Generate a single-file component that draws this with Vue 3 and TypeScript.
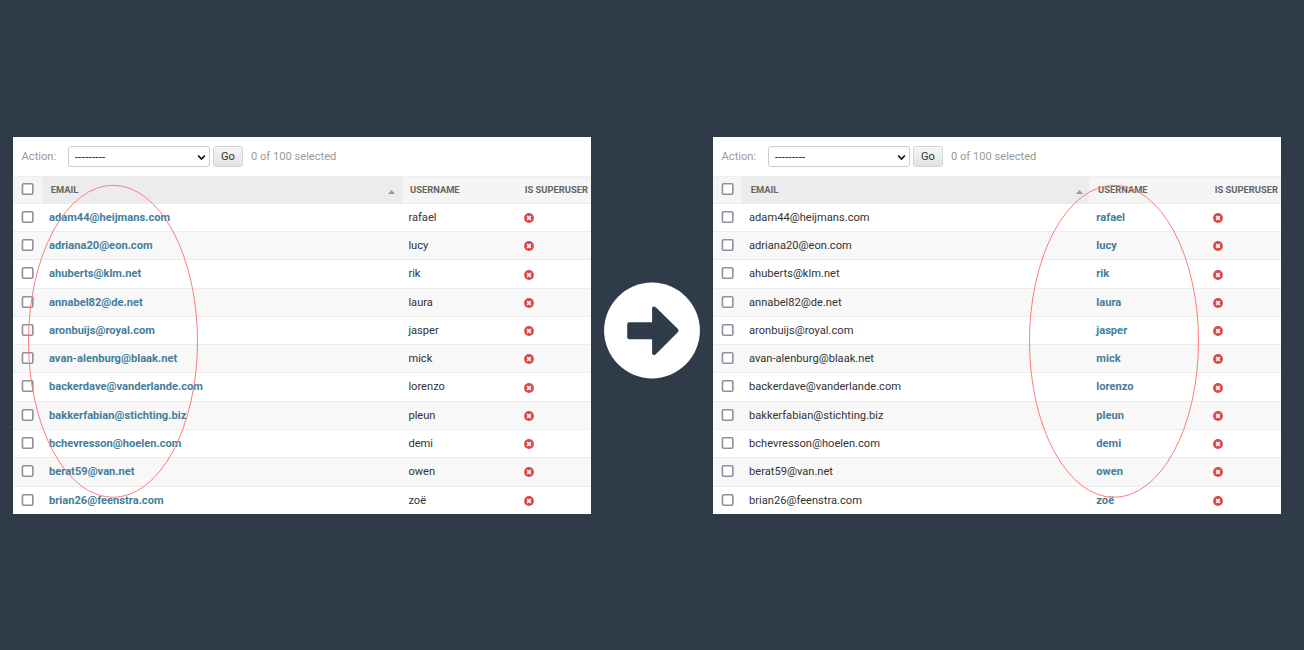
<script setup lang="ts">
interface User {
  email: string
  username: string
}

interface Panel {
  id: string
  linked: 'email' | 'username'
}

const users: User[] = [
  { email: 'adam44@heijmans.com', username: 'rafael' },
  { email: 'adriana20@eon.com', username: 'lucy' },
  { email: 'ahuberts@klm.net', username: 'rik' },
  { email: 'annabel82@de.net', username: 'laura' },
  { email: 'aronbuijs@royal.com', username: 'jasper' },
  { email: 'avan-alenburg@blaak.net', username: 'mick' },
  { email: 'backerdave@vanderlande.com', username: 'lorenzo' },
  { email: 'bakkerfabian@stichting.biz', username: 'pleun' },
  { email: 'bchevresson@hoelen.com', username: 'demi' },
  { email: 'berat59@van.net', username: 'owen' },
  { email: 'brian26@feenstra.com', username: 'zoë' },
]

const panels: Panel[] = [
  { id: 'before', linked: 'email' },
  { id: 'after', linked: 'username' },
]
</script>

<template>
  <main class="stage">
    <section v-for="panel in panels" :key="panel.id" class="panel" :class="panel.id">
      <div class="actions">
        <span class="label">Action:</span>
        <div class="select">
          <span class="dashes">---------</span>
          <svg class="chevron" viewBox="0 0 8 6"><path d="M1 1.2 L4 4.3 L7 1.2" /></svg>
        </div>
        <button class="go" type="button">Go</button>
        <span class="count">0 of 100 selected</span>
      </div>
      <div class="row head">
        <div class="cell check"><svg class="box" viewBox="0 0 13 12"><rect x="1.45" y="0.8" width="10.4" height="10.4" rx="1.2" /></svg></div>
        <div class="cell email sorted">
          <span>EMAIL</span>
          <svg class="sort" viewBox="0 0 7 4"><path d="M3.5 0 L7 4 H0 Z" /></svg>
        </div>
        <div class="cell username"><span>USERNAME</span></div>
        <div class="cell super"><span>IS SUPERUSER</span></div>
      </div>
      <div v-for="user in users" :key="user.email" class="row body">
        <div class="cell check"><svg class="box" viewBox="0 0 13 12"><rect x="1.45" y="0.8" width="10.4" height="10.4" rx="1.2" /></svg></div>
        <div class="cell email"><span :class="{ link: panel.linked === 'email' }">{{ user.email }}</span></div>
        <div class="cell username"><span :class="{ link: panel.linked === 'username' }">{{ user.username }}</span></div>
        <div class="cell super">
          <svg class="no" viewBox="0 0 10 10">
            <circle cx="5" cy="5" r="4.9" />
            <path d="M3.2 3.2 L6.8 6.8 M6.8 3.2 L3.2 6.8" />
          </svg>
        </div>
      </div>
      <svg class="ring" viewBox="0 0 172 314"><ellipse cx="86" cy="157.3" rx="84.5" ry="156" /></svg>
    </section>
    <svg class="arrow" viewBox="0 0 96 97">
      <g transform="translate(0 0.5)">
        <circle cx="48" cy="48" r="47.9" />
        <path d="M25.2 39.7 H48.1 V25.7 Q48.1 23.9 49.8 23.9 Q50.9 23.9 51.8 24.8 L74 46.6 Q75.3 48 74 49.4 L51.8 71.7 Q50.9 72.6 49.8 72.6 Q48.1 72.6 48.1 70.8 V56.7 H25.2 Q23.2 56.7 23.2 54.7 V41.7 Q23.2 39.7 25.2 39.7 Z" />
      </g>
    </svg>
  </main>
</template>

<style>
body {
  background: #303b4a;
}
</style>

<style scoped>
.stage {
  display: grid;
  grid-template-columns: 578px 96px 568px;
  column-gap: 13px;
  align-items: start;
  box-sizing: border-box;
  width: 1304px;
  height: 650px;
  padding: 137px 0 0 13px;
  overflow: hidden;
  background: #303b4a;
  font-family: Roboto, "Liberation Sans", sans-serif;
  font-size: 11.14px;
  color: #333;
}
.panel {
  position: relative;
  grid-row: 1;
  height: 377px;
  overflow: hidden;
  background: #fff;
}
.before { grid-column: 1; }
.after { grid-column: 3; }
.actions {
  display: flex;
  align-items: center;
  height: 39px;
  padding-left: 8.6px;
  color: #999;
  white-space: nowrap;
}
.label {
  width: 46.4px;
  padding-bottom: 1px;
}
.select {
  display: flex;
  align-items: center;
  justify-content: space-between;
  box-sizing: border-box;
  width: 142px;
  height: 21px;
  padding: 0 3px 0 6px;
  border: 1px solid #ccc;
  border-radius: 3px;
  color: #111;
}
.dashes {
  font-size: 11.35px;
  letter-spacing: 0.25px;
}
.chevron {
  width: 9px;
  height: 7px;
  margin-top: 1px;
}
.chevron path {
  fill: none;
  stroke: #111;
  stroke-width: 1.5;
}
.go {
  box-sizing: border-box;
  width: 30px;
  height: 21px;
  margin: 0 0 0 3px;
  padding: 0 0 1px;
  border: 1px solid #d4d4d4;
  border-radius: 3px;
  background: linear-gradient(#f7f7f7, #e2e2e2);
  color: #333;
  font: inherit;
}
.count {
  margin-left: 8px;
  padding-bottom: 1px;
}
.row {
  display: grid;
  grid-template-columns: 29px 360px 115px 1fr;
  box-sizing: border-box;
  height: 28.27px;
  border-bottom: 1px solid #ececec;
}
.after .row { grid-template-columns: 29px 347px 118px 1fr; }
.body:nth-child(even) { background: #f8f8f8; }
.cell {
  display: flex;
  align-items: center;
  padding: 0 0 0.2px 7px;
  white-space: nowrap;
}
.row .check {
  padding-bottom: 1.2px;
  padding-left: 8px;
}
.body .username { padding-left: 7.3px; }
.before .body .username { padding-left: 6.4px; }
.head {
  height: 27.85px;
  border-top: 1px solid #eee;
  background: #f5f5f5;
  color: #666;
  font-size: 9.37px;
  font-weight: 700;
}
.head .cell {
  padding-bottom: 1.65px;
  padding-left: 9px;
}
.row.head .check { padding-left: 8px; }
.before .head .username { padding-left: 8px; }
.head .sorted {
  justify-content: space-between;
  padding-right: 7px;
  background: #ececec;
}
.head .email { padding-left: 8.7px; }
.sort {
  width: 7px;
  height: 4px;
  margin-top: 5px;
  fill: #999;
}
.after .sort { margin-right: -0.6px; }
.row.head .super { padding-left: 7.7px; }
.after .body .super { padding-left: 6.2px; }
.box {
  width: 13px;
  height: 12px;
}
.box rect {
  fill: #fff;
  stroke: #8f8f9d;
  stroke-width: 1.6;
}
.link {
  color: #447e9b;
  font-weight: 700;
}
.no {
  width: 10px;
  height: 10px;
  margin-top: 1.3px;
}
.no circle { fill: #dd4646; }
.no path {
  fill: none;
  stroke: #fff;
  stroke-width: 1.7;
}
.ring {
  position: absolute;
  top: 47px;
  left: 14px;
  width: 172px;
  height: 314px;
  fill: none;
  stroke: #ff7b7b;
  stroke-width: 1;
}
.after .ring { left: 315.3px; }
.arrow {
  grid-column: 2;
  grid-row: 1;
  width: 96px;
  height: 97px;
  margin-top: 145px;
}
.arrow circle { fill: #fff; }
.arrow path { fill: #303b4a; }
</style>
